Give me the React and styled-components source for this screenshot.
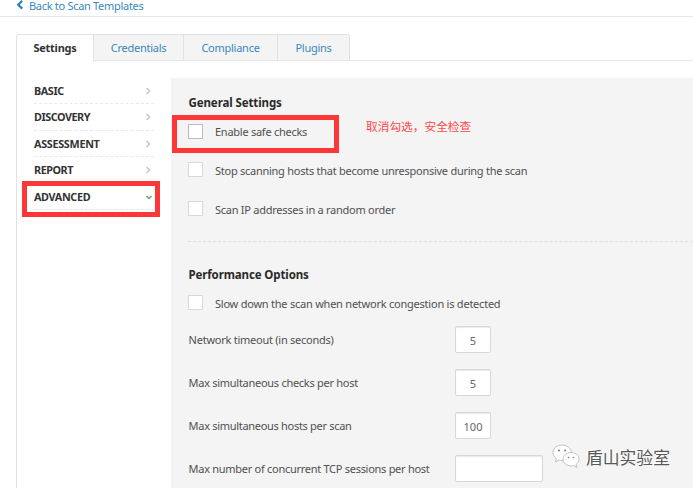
import React from "react";
import styled, { createGlobalStyle } from "styled-components";

const Global = createGlobalStyle`
  * { box-sizing: border-box; }
  body {
    margin: 0;
    background: #fff;
    color: #505050;
    font: 11px/16px "Noto Sans", "Noto Sans CJK SC", sans-serif;
    overflow: hidden;
  }
`;

const Page = styled.div`
  position: relative;
  width: 693px;
  height: 488px;
  overflow: hidden;
  white-space: nowrap;
`;
const Label = styled.span`
  letter-spacing: ${(p) => p.$track ?? -0.26}px;
`;
const TopBar = styled.header`
  display: flex;
  align-items: flex-start;
  height: 17px;
  padding-left: 16px;
  border-bottom: 1px solid #e6e6e6;
`;
const BackIcon = styled.svg`
  width: 8px;
  height: 10px;
  margin-right: 5px;
  flex: none;
`;
const BackLink = styled.a`
  line-height: 12px;
  color: #3a87bd;
`;
const TabBar = styled.nav`
  display: flex;
  height: 28px;
  margin: 17px 0 0 16px;
`;
const Tab = styled.div`
  width: ${(p) => p.$width}px;
  height: 27px;
  line-height: 26px;
  text-align: center;
  border-top: 1px solid #e2e2e2;
  border-right: 1px solid #e2e2e2;
  border-bottom: 1px solid #e6e6e6;
  background: #f4f4f4;
  color: #3a87bd;
  &:first-child {
    height: 28px;
    border-left: 1px solid #e2e2e2;
    border-bottom: 0;
    border-top-left-radius: 3px;
    background: #fff;
    color: #333;
    font-weight: 700;
  }
  &:last-of-type { border-top-right-radius: 3px; }
`;
const TabRule = styled.span`
  flex: 1;
  height: 27px;
  border-bottom: 1px solid #e6e6e6;
`;
const Body = styled.main`
  display: flex;
  height: 426px;
  margin-left: 16px;
  padding-top: 16px;
  border-left: 1px solid #e2e2e2;
`;
const Sidebar = styled.aside`
  width: 154px;
  flex: none;
  padding: 0 17px;
`;
const SideItem = styled.div`
  display: flex;
  align-items: center;
  justify-content: space-between;
  height: 26.4px;
  padding-top: 0.6px;
  border-bottom: 1px dashed #e8e8e8;
  color: #333;
  font-weight: 700;
  font-size: 10.8px;
`;
const Chevron = styled.svg`
  width: 8px;
  height: 8px;
  margin-right: ${(p) => (p.$open ? 1 : 2.5)}px;
  fill: none;
  stroke: ${(p) => (p.$open ? "#5cac6a" : "#c8c8c8")};
  stroke-width: 1.5;
`;
const Panel = styled.section`
  flex: 1;
  padding: 16px 0 0 17px;
  background: #f4f4f4;
`;
const Heading = styled.h2`
  margin: 0;
  height: 18px;
  padding-left: 0.5px;
  line-height: 18px;
  font-size: 11.5px;
  color: #2a2a2a;
`;
const CheckRow = styled.label`
  display: flex;
  align-items: flex-start;
  height: ${(p) => p.$height}px;
  line-height: ${(p) => (p.$strong ? 16 : 18)}px;
`;
const Box = styled.span`
  width: 15px;
  height: 15px;
  margin: 0 12px 0 0;
  flex: none;
  border: 1px solid ${(p) => (p.$strong ? "#bcbcbc" : "#d8d8d8")};
  background: #fff;
`;
const Divider = styled.hr`
  margin: 0;
  border: 0;
  border-top: 1px dashed #dedede;
`;
const Section = styled.div`
  padding-top: ${(p) => p.$top}px;
`;
const FieldRow = styled.div`
  display: flex;
  align-items: center;
  height: 43px;
`;
const FieldLabel = styled.div`
  width: 267px;
  padding-left: 0.6px;
  flex: none;
`;
const Field = styled.div`
  width: ${(p) => p.$width}px;
  height: 27px;
  line-height: 28px;
  text-align: center;
  color: #666;
  border: 1px solid #d8d8d8;
  border-radius: 2px;
  background: #fff;
  box-shadow: inset 0 1px 1px #e9e9e9;
`;
const Marker = styled.div`
  position: absolute;
  left: ${(p) => p.$x}px;
  top: ${(p) => p.$y}px;
  width: ${(p) => p.$w}px;
  height: ${(p) => p.$h}px;
  border: 5px solid #fd3636;
`;
const Note = styled.div`
  position: absolute;
  left: 366px;
  top: 117px;
  color: #fd4848;
  font: 11.7px/17px "Noto Sans CJK SC", sans-serif;
`;
const Watermark = styled.div`
  position: absolute;
  left: 552px;
  top: 444px;
  display: flex;
  color: #585858;
  font: 16.8px/26px "Noto Sans CJK SC", sans-serif;
  text-shadow: -1px -1px 0 #fff;
`;
const WeChat = styled.svg`
  width: 28px;
  height: 25px;
  margin-right: 6px;
  fill: #fff;
  stroke: #aaa;
  stroke-width: 0.7;
`;

const sections = [
  ["BASIC", -0.4],
  ["DISCOVERY", -0.45],
  ["ASSESSMENT", -0.3],
  ["REPORT", -0.45],
  ["ADVANCED", -0.35],
];
const fields = [
  ["Network timeout (in seconds)", "5", 36, -0.25],
  ["Max simultaneous checks per host", "5", 36, -0.28],
  ["Max simultaneous hosts per scan", "100", 36, -0.3],
  ["Max number of concurrent TCP sessions per host", "", 88, -0.28],
];

export default function App() {
  return (
    <Page>
      <Global />
      <TopBar>
        <BackIcon viewBox="0 0 8 10">
          <path d="M6.2 .8 2.2 4.7l4 3.9" fill="none" stroke="#2f7fb8" strokeWidth="2.2" />
        </BackIcon>
        <BackLink><Label $track={-0.3}>Back to Scan Templates</Label></BackLink>
      </TopBar>
      <TabBar>
        <Tab $width={78}><Label>Settings</Label></Tab>
        <Tab $width={90}><Label>Credentials</Label></Tab>
        <Tab $width={94}><Label>Compliance</Label></Tab>
        <Tab $width={72}><Label>Plugins</Label></Tab>
        <TabRule />
      </TabBar>
      <Body>
        <Sidebar>
          {sections.map(([name, track]) => (
            <SideItem key={name}>
              <Label $track={track}>{name}</Label>
              <Chevron viewBox="0 0 8 8" $open={name === "ADVANCED"}>
                <path d={name === "ADVANCED" ? "M1.500 3l2.500 2.500L6.500 3" : "M2.500 1l3 3-3 3"} />
              </Chevron>
            </SideItem>
          ))}
        </Sidebar>
        <Panel>
          <Heading><Label $track={-0.1}>General Settings</Label></Heading>
          <Section $top={12}>
            <CheckRow $strong $height={38}><Box $strong /><Label>Enable safe checks</Label></CheckRow>
            <CheckRow $height={39}><Box /><Label>Stop scanning hosts that become unresponsive during the scan</Label></CheckRow>
            <CheckRow $height={40}><Box /><Label>Scan IP addresses in a random order</Label></CheckRow>
          </Section>
          <Divider />
          <Section $top={24}>
            <Heading><Label $track={-0.12}>Performance Options</Label></Heading>
            <Section $top={11}>
              <CheckRow $height={23}><Box /><Label $track={-0.23}>Slow down the scan when network congestion is detected</Label></CheckRow>
              {fields.map(([name, value, width, track]) => (
                <FieldRow key={name}>
                  <FieldLabel><Label $track={track}>{name}</Label></FieldLabel>
                  <Field $width={width}>{value}</Field>
                </FieldRow>
              ))}
            </Section>
          </Section>
        </Panel>
      </Body>
      <Marker $x={22} $y={181} $w={138} $h={36} />
      <Marker $x={172} $y={115} $w={167} $h={38} />
      <Note>取消勾选，安全检查</Note>
      <Watermark>
        <WeChat viewBox="0 0 28 25">
          <path d="M10 1C4.8 1 1 4.300 1 8.500c0 2.400 1.300 4.500 3.300 5.900L3.500 18l3.600-2c1 .3 2 .4 3 .4 5 0 9.200-3.400 9.200-7.700S15 1 10 1z" />
          <path d="M19 8.500c-4.600 0-8 3-8 6.700s3.500 6.700 8 6.700c1 0 1.800-.1 2.600-.4l3.200 1.900-.8-3c1.900-1.300 3-3.100 3-5.200 0-3.700-3.500-6.700-8-6.700z" />
          <g fill="#777" stroke="none">
            <circle cx="7" cy="6.500" r="1" /><circle cx="13" cy="6.500" r="1" />
            <circle cx="16.500" cy="13.500" r=".8" /><circle cx="21.500" cy="13.500" r=".8" />
          </g>
        </WeChat>
        <span>盾山实验室</span>
      </Watermark>
    </Page>
  );
}
